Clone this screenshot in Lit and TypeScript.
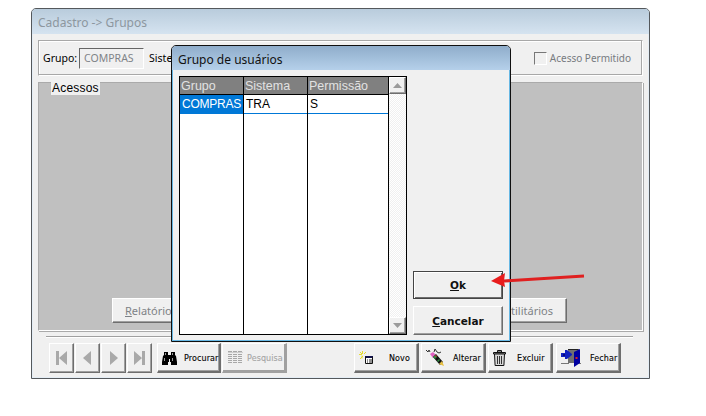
import { LitElement, html, css, svg } from "lit";
import { customElement } from "lit/decorators.js";

const icons = {
  binoculars: svg`<svg width="15" height="14" viewBox="0 0 15 14"><path d="M2 1h4v3h3V1h4v3l1 1 1 6v3H9v-3H8V8H7v3H6v3H0v-3l1-6 1-1z" fill="#000"/><path d="M3 2h1v2H3zM10 2h1v2h-1zM2 7h1v3H2zM10 7h1v3h-1z" fill="#9a9a9a"/></svg>`,
  grid: svg`<svg width="15" height="15" viewBox="0 0 15 15"><path d="M0 1.500h15M0 4.500h15M0 6.500h15M0 8.500h15M0 10.500h15M0 12.500h15" stroke="#a8a8a8" stroke-dasharray="4 1" fill="none"/><path d="M0 2.500h15" stroke="#cfcfcf"/></svg>`,
  novo: svg`<svg width="14" height="14" viewBox="0 0 14 14"><path d="M3.500 0v3M0 3.500h3M7 1 5 3M1 1l2 2M4 5 1 8M3 4.500v3" stroke="#e6dc30" fill="none"/><path d="M6 5h8v8H6z" fill="#fff"/><path d="M6 5h8v2H6z" fill="#12124a"/><path d="M6.500 6v6.500h7V6" stroke="#111" fill="none"/><path d="M8 9h1M10 9h3M8 11h1M10 11h3" stroke="#222"/></svg>`,
  alterar: svg`<svg width="18" height="17" viewBox="0 0 18 17"><path d="M0 1l2 2 1-2 1 2M8 3l1-3 2 3 2 1 2-1" stroke="#333" fill="none"/><path d="M4 5l3-2 3 3-3 3z" fill="#e060c0"/><path d="M7 8l3-3 7 8-3 3z" fill="#111"/><path d="M7 8l2-2 2 2-2 2zM11 12l2-2 1 1-2 2z" fill="#2e8a40"/><path d="M13 15l3-3 2 5z" fill="#e8c040"/><path d="M9 7l1-1 1 1-1 1z" fill="#d03030"/></svg>`,
  trash: svg`<svg width="13" height="16" viewBox="0 0 13 16"><path d="M4.500.500h4v1.500h-4z" fill="#fff" stroke="#111"/><path d="M.500 2.500h12v1.500H.500z" fill="#ddd" stroke="#111"/><path d="M1.500 4h10l-.6 11.500H2.100z" fill="#d8d8d8" stroke="#111"/><path d="M4.500 6v8M6.500 6v8M8.500 6v8" stroke="#333"/></svg>`,
  door: svg`<svg width="20" height="18" viewBox="0 0 20 18"><path d="M7 1h10v13H7z" fill="#707070"/><path d="M7 .500h10.500V14" stroke="#222" fill="none"/><path d="M0 14.500h8M17 14.500h3" stroke="#777"/><path d="M13 3l6-3v14l-6 4z" fill="#0000a0"/><path d="M14.500 8h2v2h-2z" fill="#e02020"/><path d="M0 4h4V1h2l5 4v1l-5 4H4V8H0z" fill="#1020c0"/><path d="M2 5h2v2H2z" fill="#08087a"/></svg>`,
};

@customElement("app-root")
export class AppRoot extends LitElement {
  static styles = css`
    :host {
      display: block;
      position: relative;
      width: 706px;
      height: 416px;
      background: #fff;
      overflow: hidden;
      font-family: "Liberation Sans", Arial, sans-serif;
      font-size: 12px;
      color: #000;
    }
    .page { padding: 8px 56px 0 31px; }
    .win {
      height: 371px;
      box-sizing: border-box;
      border: 1px solid #54585c;
      border-radius: 5px 5px 0 0;
      background: #f0f0f0;
      display: flex;
      flex-direction: column;
      box-shadow: inset 0 0 0 1px #e4edf5;
    }
    .win-title {
      height: 25px;
      flex: none;
      display: flex;
      align-items: center;
      padding: 1px 0 0 6px;
      box-sizing: border-box;
      background: linear-gradient(#b9ccdc, #d5e3f0);
      border-radius: 4px 4px 0 0;
      font: 12px "Noto Sans", sans-serif;
      color: #8d979f;
    }
    .win-body {
      flex: 1;
      display: flex;
      flex-direction: column;
      padding: 6px 6px 0 6px;
    }
    .grp-top {
      height: 36px;
      flex: none;
      box-sizing: border-box;
      border: 1px solid #a8a8a8;
      border-right-color: #fff;
      border-bottom-color: #fff;
      box-shadow: inset -1px -1px 0 #a8a8a8, inset 1px 1px 0 #fff;
      display: flex;
      align-items: center;
      padding-left: 4px;
      font-family: "Noto Sans", sans-serif;
      font-size: 10.500px;
    }
    .input {
      width: 65px;
      height: 21px;
      margin-left: 2px;
      box-sizing: border-box;
      border: 1px solid #fff;
      border-top-color: #666;
      border-left-color: #666;
      color: #808488;
      display: flex;
      align-items: center;
      padding-left: 4px;
      font-size: 10.500px;
      margin-right: 5px;
    }
    .spacer { flex: 1; }
    .check {
      display: flex;
      align-items: center;
      gap: 3px;
      color: #777b80;
      font-size: 10px;
      margin-right: 11px;
    }
    .box {
      width: 11px;
      height: 11px;
      border: 1px solid #fff;
      border-top-color: #777;
      border-left-color: #777;
    }
    .grp-acc {
      height: 249px;
      flex: none;
      margin-top: 6px;
      box-sizing: border-box;
      border: 1px solid #fff;
      border-top-color: #aaa;
      border-left-color: #aaa;
      box-shadow: 1px 1px 0 #aaa;
      background: #c0c0c0;
      position: relative;
      display: flex;
      align-items: flex-end;
      justify-content: space-between;
      padding: 0 75px 7px 73px;
    }
    .legend {
      position: absolute;
      left: 12px;
      top: -1px;
      height: 13px;
      line-height: 13px;
      padding: 0 1px;
      background: #f0f0f0;
      letter-spacing: 0.2px;
    }
    .btn {
      box-sizing: border-box;
      background: #f0f0f0;
      border: 1px solid;
      border-color: #fff #6e6e6e #6e6e6e #fff;
      box-shadow: inset -1px -1px 0 #a0a0a0;
      display: flex;
      align-items: center;
      justify-content: center;
    }
    .acc-btn {
      width: 78px;
      height: 25px;
      color: #7e8286;
      font-family: "Noto Sans", sans-serif;
      font-size: 11px;
    }
    .sep {
      height: 0;
      margin: 5px 10px 0 8px;
      border-top: 1px solid #a0a0a0;
      border-bottom: 1px solid #fff;
      flex: none;
    }
    .tools {
      display: flex;
      height: 30px;
      margin-top: 5px;
      padding-left: 11px;
    }
    .nav {
      width: 25px;
      height: 30px;
      margin-right: 1px;
      color: #a9a9a9;
    }
    .tb {
      height: 30px;
      width: 65px;
      margin-right: 2px;
      font: 8px "DejaVu Sans", sans-serif;
      letter-spacing: 0.1px;
      justify-content: flex-start;
      border-width: 1px 2px 2px 1px;
      -webkit-text-stroke: 0.1px #000;
      padding: 0 0 0 4px;
    }
    .tb span { padding-top: 2px; }
    .tb.proc { width: 64px; margin-left: 4px; margin-right: 1px; gap: 7px; }
    .tb.off {
      color: #a4a4a4;
      -webkit-text-stroke: 0.1px #a4a4a4;
      border-color: #fff #a0a0a0 #a0a0a0 #fff;
      gap: 4px;
      padding-left: 5px;
    }
    .tb.novo { margin-left: 65px; gap: 16px; }
    .tb.alt { padding-left: 4px; gap: 9px; }
    .tb.excl { gap: 11px; }
    .tb.fech { margin-left: 1px; gap: 9px; }
    .dlg {
      position: absolute;
      left: 171px;
      top: 45px;
      width: 340px;
      height: 297px;
      box-sizing: border-box;
      border: 1px solid #101010;
      border-radius: 5px 5px 0 0;
      background: #f0f0f0;
      display: flex;
      flex-direction: column;
    }
    .dlg-title {
      height: 24px;
      flex: none;
      display: flex;
      align-items: center;
      padding: 2px 0 0 6px;
      box-sizing: border-box;
      background: linear-gradient(#8fadcb, #b5d0ea);
      border-radius: 4px 4px 0 0;
      font: 12px "Noto Sans", sans-serif;
      color: #111;
    }
    .dlg-body {
      flex: 1;
      display: flex;
      padding: 6px 6px 5px 6px;
      border: solid #68b8e4;
      border-width: 0 1px 1px 1px;
      min-height: 0;
    }
    .grid {
      width: 228px;
      box-sizing: border-box;
      border: 1px solid #000;
      background: #fff;
      display: flex;
    }
    .table { flex: 1; display: flex; position: relative; }
    .col { border-right: 1px solid #000; box-sizing: border-box; }
    .c1 { width: 64px; }
    .c2 { width: 64px; }
    .c3 { width: 81px; }
    .hd {
      height: 18px;
      line-height: 18px;
      padding-left: 1px;
      background: #808080;
      border-bottom: 1px solid #000;
      color: #e2e2e2;
      font-size: 12.500px;
      box-sizing: border-box;
    }
    .cell {
      height: 19px;
      line-height: 19px;
      padding-left: 2px;
      border-bottom: 1px solid #0078d7;
      box-sizing: border-box;
      font-size: 12px;
      white-space: nowrap;
    }
    .cell.sel {
      background: #0078d7;
      color: #fff;
      letter-spacing: -0.25px;
    }
    .scroll {
      width: 17px;
      flex: none;
      background: repeating-conic-gradient(#f0f0f0 0 25%, #fff 0 50%) 0 0 / 2px 2px;
      display: flex;
      flex-direction: column;
      justify-content: space-between;
    }
    .sb {
      width: 17px;
      height: 17px;
      color: #9a9a9a;
    }
    .side {
      flex: 1;
      display: flex;
      flex-direction: column;
      justify-content: flex-end;
      padding-left: 6px;
      gap: 7px;
    }
    .dbtn {
      width: 90px;
      height: 29px;
      font-weight: bold;
      font-size: 10.500px;
      font-family: "DejaVu Sans", sans-serif;
      color: #111;
    }
    .dbtn.def {
      height: 28px;
      border: 1px solid #444;
      box-shadow: inset 1px 1px 0 #fff, inset -1px -1px 0 #6e6e6e;
    }
    .arrow {
      position: absolute;
      left: 485px;
      top: 270px;
    }
  `;

  nav(d: string) {
    return html`<div class="btn nav">
      <svg width="13" height="16" viewBox="0 0 13 16" fill="currentColor"><path d="${d}"/></svg>
    </div>`;
  }

  render() {
    return html`
      <div class="page">
        <div class="win">
          <div class="win-title">Cadastro -&gt; Grupos</div>
          <div class="win-body">
            <div class="grp-top">
              <span>Grupo:</span>
              <div class="input">COMPRAS</div>
              <span>Sistema:</span>
              <div class="spacer"></div>
              <div class="check"><span class="box"></span><span>Acesso Permitido</span></div>
            </div>
            <div class="grp-acc">
              <div class="legend">Acessos</div>
              <div class="btn acc-btn"><span><u>R</u>elatórios</span></div>
              <div class="btn acc-btn"><span><u>U</u>tilitários</span></div>
            </div>
            <div class="sep"></div>
            <div class="tools">
              ${this.nav("M1 1h3v14H1zM12 1v14L4 8z")}
              ${this.nav("M10 1v14L2 8z")}
              ${this.nav("M3 1v14l8-7z")}
              ${this.nav("M1 1v14l8-7zM9 1h3v14H9z")}
              <div class="btn tb proc">${icons.binoculars}<span>Procurar</span></div>
              <div class="btn tb off">${icons.grid}<span>Pesquisa</span></div>
              <div class="btn tb novo">${icons.novo}<span>Novo</span></div>
              <div class="btn tb alt">${icons.alterar}<span>Alterar</span></div>
              <div class="btn tb excl">${icons.trash}<span>Excluir</span></div>
              <div class="btn tb fech">${icons.door}<span>Fechar</span></div>
            </div>
          </div>
        </div>
      </div>

      <div class="dlg">
        <div class="dlg-title">Grupo de usuários</div>
        <div class="dlg-body">
          <div class="grid">
            <div class="table">
              <div class="col c1"><div class="hd">Grupo</div><div class="cell sel">COMPRAS</div></div>
              <div class="col c2"><div class="hd">Sistema</div><div class="cell">TRA</div></div>
              <div class="col c3"><div class="hd">Permissão</div><div class="cell">S</div></div>
            </div>
            <div class="scroll">
              <div class="btn sb"><svg width="9" height="5" viewBox="0 0 9 5" fill="currentColor"><path d="M4.500 0 9 5H0z"/></svg></div>
              <div class="btn sb"><svg width="9" height="5" viewBox="0 0 9 5" fill="currentColor"><path d="M4.500 5 9 0H0z"/></svg></div>
            </div>
          </div>
          <div class="side">
            <div class="btn dbtn def"><span><u>O</u>k</span></div>
            <div class="btn dbtn"><span><u>C</u>ancelar</span></div>
          </div>
        </div>
      </div>

      <svg class="arrow" width="104" height="24" viewBox="0 0 104 24">
        <path d="M99 6 19 11" stroke="#e02020" stroke-width="3" fill="none"/>
        <path d="M6 11 20 3l-1 8 1 6z" fill="#e81c1c"/>
      </svg>
    `;
  }
}
